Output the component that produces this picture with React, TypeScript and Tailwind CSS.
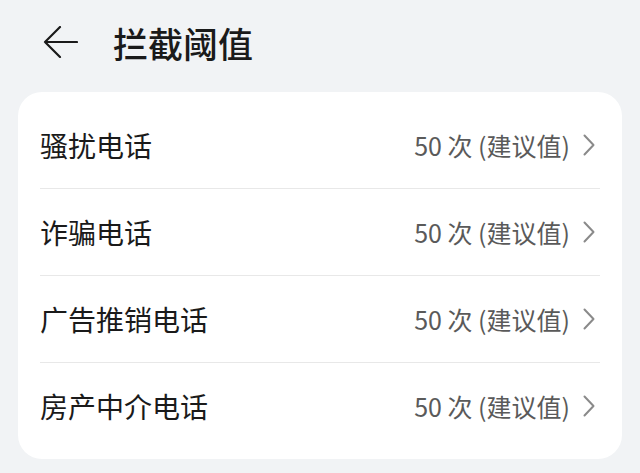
import React from 'react';

const rows = ['骚扰电话', '诈骗电话', '广告推销电话', '房产中介电话'];

export default function App() {
  return (
    <div
      className="w-full h-[473px] bg-[#f1f3f5] overflow-hidden"
      style={{ fontFamily: '"Noto Sans CJK SC", "Noto Sans", sans-serif' }}
    >
      {/* Header */}
      <div className="h-[84px] flex items-center pl-[43px]">
        <svg width="35" height="32" viewBox="0 0 35 32" fill="none">
          <path d="M34 16H2M17 1L2 16L17 31" stroke="#1a1a1a" strokeWidth="2.2" strokeLinecap="round" strokeLinejoin="round" />
        </svg>
        <h1 className="ml-[35px] text-[35px] leading-none font-medium text-[#1a1a1a]">拦截阈值</h1>
      </div>

      {/* Card */}
      <div className="mx-[18px] mt-[8px] bg-white rounded-[24px] py-[10px] px-[22px]">
        {rows.map((label, i) => (
          <div key={label} className={i > 0 ? 'border-t border-[#e8e8e8]' : ''}>
            <div className="h-[86px] flex items-center justify-between">
              <span className="text-[28px] leading-none text-[#1a1a1a]">{label}</span>
              <div className="flex items-center pr-[5px]">
                <span className="text-[25px] leading-none text-[#5a5a5a]">50 次 (建议值)</span>
                <svg className="ml-[13px]" width="12" height="22" viewBox="0 0 12 22" fill="none">
                  <path d="M1.5 1.5L10.5 11L1.5 20.5" stroke="#8a8a8a" strokeWidth="2" strokeLinecap="round" strokeLinejoin="round" />
                </svg>
              </div>
            </div>
          </div>
        ))}
      </div>
    </div>
  );
}
